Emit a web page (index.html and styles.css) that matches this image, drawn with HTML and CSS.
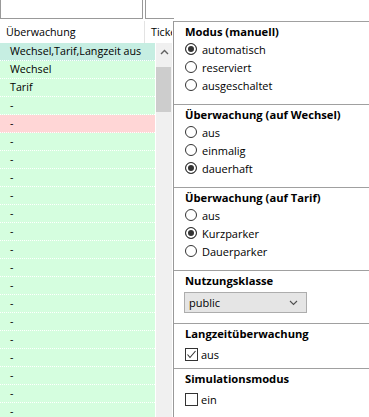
FILE: index.html
```html
<!DOCTYPE html>
<html lang="de">
<head>
  <meta charset="UTF-8">
  <title>Überwachung</title>
  <link rel="stylesheet" href="styles.css">
</head>
<body>
  <div class="top">
    <div class="field first"></div>
    <div class="field second"></div>
  </div>

  <div class="main">
    <div class="list">
      <div class="head">
        <div class="hcol first">Überwachung</div>
        <div class="hcol">Ticket</div>
      </div>
      <div class="body">
        <div class="rows">
          <div class="row sel">Wechsel,Tarif,Langzeit aus</div>
          <div class="row">Wechsel</div>
          <div class="row">Tarif</div>
          <div class="row">-</div>
          <div class="row red">-</div>
          <div class="row">-</div>
          <div class="row">-</div>
          <div class="row">-</div>
          <div class="row">-</div>
          <div class="row">-</div>
          <div class="row">-</div>
          <div class="row">-</div>
          <div class="row">-</div>
          <div class="row">-</div>
          <div class="row">-</div>
          <div class="row">-</div>
          <div class="row">-</div>
          <div class="row">-</div>
          <div class="row">-</div>
          <div class="row">-</div>
          <div class="row">-</div>
          <div class="row">-</div>
        </div>
        <div class="scroll">
          <div class="up">
            <svg width="9" height="6" viewBox="0 0 9 6"><polyline points="1,5 4.5,1.5 8,5" fill="none" stroke="#606060" stroke-width="1.4"/></svg>
          </div>
          <div class="thumb"></div>
        </div>
      </div>
    </div>

    <div class="panel">
      <div class="group">
        <div class="title">Modus (manuell)</div>
        <div class="opt"><span class="radio on"></span>automatisch</div>
        <div class="opt"><span class="radio"></span>reserviert</div>
        <div class="opt"><span class="radio"></span>ausgeschaltet</div>
      </div>
      <div class="group">
        <div class="title">Überwachung (auf Wechsel)</div>
        <div class="opt"><span class="radio"></span>aus</div>
        <div class="opt"><span class="radio"></span>einmalig</div>
        <div class="opt"><span class="radio on"></span>dauerhaft</div>
      </div>
      <div class="group">
        <div class="title">Überwachung (auf Tarif)</div>
        <div class="opt"><span class="radio"></span>aus</div>
        <div class="opt"><span class="radio on"></span>Kurzparker</div>
        <div class="opt"><span class="radio"></span>Dauerparker</div>
      </div>
      <div class="group short">
        <div class="title">Nutzungsklasse</div>
        <div class="select">
          <span>public</span>
          <svg width="9" height="6" viewBox="0 0 9 6"><polyline points="1,1 4.5,4.5 8,1" fill="none" stroke="#505050" stroke-width="1.1"/></svg>
        </div>
      </div>
      <div class="group check">
        <div class="title">Langzeitüberwachung</div>
        <div class="opt"><span class="box"><svg width="11" height="11" viewBox="0 0 11 11"><polyline points="1.5,5.5 4,8.5 9.5,2" fill="none" stroke="#333" stroke-width="1.1"/></svg></span>aus</div>
      </div>
      <div class="group check">
        <div class="title">Simulationsmodus</div>
        <div class="opt"><span class="box"></span>ein</div>
      </div>
    </div>
  </div>
</body>
</html>
```

FILE: styles.css
```css
*{
  padding: 0;
  margin: 0;
  box-sizing: border-box;
}

body{
  background: #fff;
  color: #000;
  font-family: "Open Sans", sans-serif;
  font-size: 10.7px;
  width: 369px;
  height: 417px;
  overflow: hidden;
}

/* obere Eingabefelder */
.top{
  display: flex;
  height: 21px;
  gap: 2px;
}
.field{
  height: 19px;
  border: 1px solid #999;
  border-top: none;
}
.field.first{
  width: 143px;
}
.field.second{
  width: 29px;
  border-right: none;
}

.main{
  display: flex;
  height: 396px;
}

/* Tabelle links */
.list{
  width: 173px;
  overflow: hidden;
}
.head{
  display: flex;
  height: 22px;
  line-height: 22px;
  width: 172px;
  overflow: hidden;
}
.hcol{
  padding-left: 6px;
  white-space: nowrap;
}
.hcol.first{
  width: 145px;
  flex: none;
  border-right: 1px solid #e3e3e3;
}
.body{
  display: flex;
  gap: 1px;
}
.rows{
  width: 155px;
}
.row{
  height: 18px;
  line-height: 17px;
  padding-left: 10px;
  background: #d5fedf;
  border-bottom: 1px dotted #fff;
  white-space: nowrap;
}
.row.sel{
  background: #c6eee2;
}
.row.red{
  background: #ffd6d6;
}
.scroll{
  width: 16px;
  height: 380px;
  background: #f0f0f0;
}
.up{
  height: 17px;
  display: flex;
  align-items: center;
  justify-content: center;
}
.thumb{
  margin-top: 7px;
  width: 15px;
  height: 45px;
  background: #cdcdcd;
}

/* Einstellungen rechts */
.panel{
  flex: 1;
  border-left: 1px solid #999;
  font-size: 11px;
}
.group{
  border-top: 1px solid #a0a0a0;
  padding: 2px 0 10px 11px;
}
.group.check{
  padding-bottom: 5px;
}
.title{
  font-weight: bold;
  font-size: 11.2px;
  line-height: 16px;
  height: 16px;
}
.opt{
  display: flex;
  align-items: center;
  height: 18px;
}
.check .opt{
  margin-top: 3px;
}
.radio{
  width: 12px;
  height: 12px;
  border: 1px solid #333;
  border-radius: 50%;
  margin-right: 5px;
  background: #fff;
}
.radio.on{
  background: #333;
  box-shadow: inset 0 0 0 2px #fff;
}
.box{
  width: 13px;
  height: 13px;
  border: 1px solid #333;
  background: #fff;
  margin-right: 3px;
  display: flex;
}
.select{
  margin-top: 3px;
  margin-left: -1px;
  width: 123px;
  height: 21px;
  border: 1px solid #adadad;
  background: #e5e5e5;
  display: flex;
  align-items: center;
  justify-content: space-between;
  padding: 0 8px 0 4px;
}
```
